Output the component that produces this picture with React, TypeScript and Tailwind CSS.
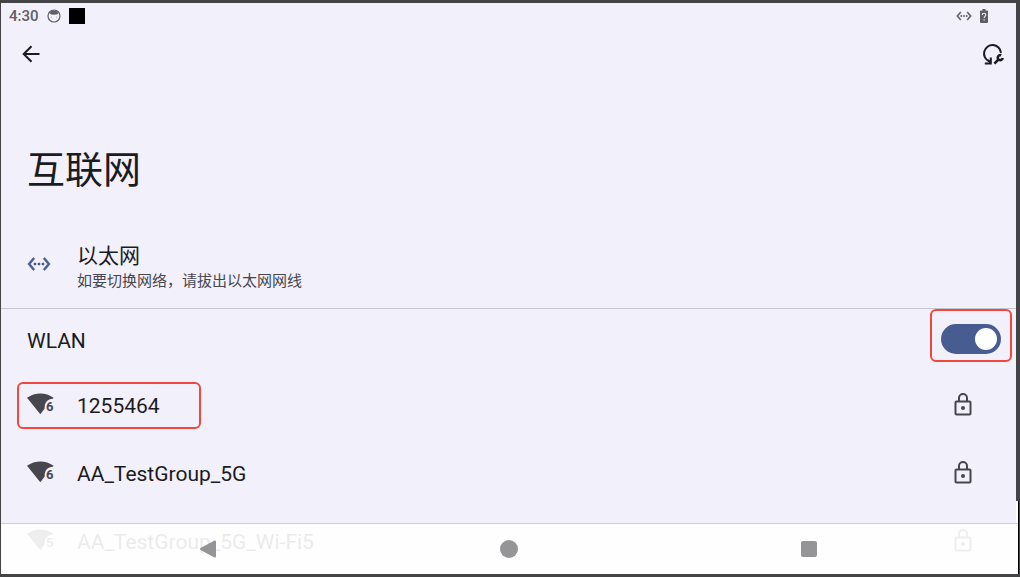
import { useState } from 'react';

type IconProps = { className?: string };

type Network = {
  ssid: string;
  generation: string;
  highlighted?: boolean;
};

const NETWORKS: Network[] = [
  { ssid: '1255464', generation: '6', highlighted: true },
  { ssid: 'AA_TestGroup_5G', generation: '6' },
  { ssid: 'AA_TestGroup_5G_Wi-Fi5', generation: '5' },
];

function EthernetIcon({ className }: IconProps) {
  return (
    <svg viewBox="0 0 24 24" fill="currentColor" stroke="currentColor" strokeWidth="0.5" className={className} aria-hidden="true">
      <path d="M7.77 6.76L6.23 5.48.82 12l5.41 6.52 1.54-1.28L3.42 12l4.35-5.24zM7 13h2v-2H7v2zm10-2h-2v2h2v-2zm-6 2h2v-2h-2v2zm6.77-7.52l-1.54 1.28L20.58 12l-4.35 5.24 1.54 1.28L23.18 12l-5.41-6.52z" />
    </svg>
  );
}

function FaceIcon({ className }: IconProps) {
  return (
    <svg viewBox="0 0 14 14" className={className} aria-hidden="true">
      <circle cx="7" cy="7" r="6" fill="none" stroke="currentColor" strokeWidth="1.2" />
      <path d="M2.8 4.6C3.2 2.2 5 1.6 7 1.6s3.8.6 4.2 3C10.5 5.4 9.5 5.8 7 5.8S3.500 5.400 2.800 4.600z" fill="currentColor" />
      <circle cx="4.6" cy="8" r="0.4" fill="currentColor" />
      <circle cx="9.4" cy="8" r="0.4" fill="currentColor" />
    </svg>
  );
}

function BatteryUnknownIcon({ className }: IconProps) {
  return (
    <svg viewBox="0 0 8 14" className={className} aria-hidden="true">
      <path d="M2.5 0h3v1.4H7.2a.8.8 0 0 1 .8.8v11a.8.8 0 0 1-.8.8H.8a.8.8 0 0 1-.8-.8v-11a.8.8 0 0 1 .8-.8h1.7z" fill="currentColor" />
      <path d="M2.2 6C2.2 3.6 5.8 3.6 5.8 6c0 1.300-1.700 1.400-1.700 3M4.100 10.200v1.300" fill="none" stroke="#f2f0fa" strokeWidth="1.1" />
    </svg>
  );
}

function BackIcon({ className }: IconProps) {
  return (
    <svg viewBox="0 0 18 18" fill="none" stroke="currentColor" strokeWidth="2" className={className} aria-hidden="true">
      <path d="M17.5 9H2M9.5 1.2L1.7 9l7.8 7.8" />
    </svg>
  );
}

function ResetNetworkIcon({ className }: IconProps) {
  return (
    <svg viewBox="0 0 22 22" fill="none" stroke="currentColor" className={className} aria-hidden="true">
      <path d="M7.2 18.4A8.5 8.5 0 1 1 19 9.800" strokeWidth="2" />
      <path d="M2.8 20.400H8.800v-6" strokeWidth="2" />
      <path d="M8.600 19.800L5.800 17" strokeWidth="2" />
      <path d="M12.400 20.600l4.400-4.400" strokeWidth="2.600" />
      <path d="M19.200 12.300a2.500 2.500 0 1 0 1.500 2.800" strokeWidth="2.600" />
    </svg>
  );
}

function WifiIcon({ generation, className }: IconProps & { generation: string }) {
  return (
    <svg viewBox="0 0 28 22" fill="currentColor" className={className} aria-hidden="true">
      <path d="M0 4.8C8-.9 18.8-.9 26.6 4.8l-.8 1C20.500 6 17.400 9.500 17.700 15.600L13.300 21.200z" />
      <text x="19" y="18" fontSize="13" fontWeight="700" fontFamily="Roboto, sans-serif">{generation}</text>
    </svg>
  );
}

function LockIcon({ className }: IconProps) {
  return (
    <svg viewBox="0 0 18 23" fill="none" stroke="currentColor" strokeWidth="2" className={className} aria-hidden="true">
      <rect x="1.5" y="8.5" width="15" height="13" rx="1" />
      <path d="M5 8.5V5a4 4 0 0 1 8 0v3.5" />
      <circle cx="9" cy="15" r="2" fill="currentColor" stroke="none" />
    </svg>
  );
}

function StatusBar() {
  return (
    <div className="flex h-[26px] items-center justify-between pl-2 pr-7 text-[#5f5d66]">
      <div className="flex items-center gap-2">
        <span className="text-[15px] leading-5 font-medium">4:30</span>
        <FaceIcon className="size-3.5" />
        <span className="size-4 bg-black" />
      </div>
      <div className="flex items-center gap-2">
        <EthernetIcon className="size-4" />
        <BatteryUnknownIcon className="h-3.5 w-2" />
      </div>
    </div>
  );
}

function NetworkRow({ ssid, generation, highlighted }: Network) {
  return (
    <li className="relative">
      <button type="button" className="flex h-[68px] w-full items-center pl-[26px] pr-11 text-left">
        <WifiIcon generation={generation} className="mb-0.5 h-[22px] w-7 text-[#47464f]" />
        <span className="ml-[22px] flex-1 pt-px text-[21px] leading-7">{ssid}</span>
        <LockIcon className="mb-0.5 h-[23px] w-[18px] text-[#47464f]" />
      </button>
      {highlighted && (
        <span className="pointer-events-none absolute left-4 top-[11px] h-[47px] w-[184px] rounded-md border-2 border-[#f0483e]" />
      )}
    </li>
  );
}

function NavigationBar() {
  return (
    <nav className="absolute bottom-0 left-0 right-[2px] flex h-[51px] items-center justify-around border-t border-[#cfced6] bg-white/91 pl-14 pr-[60px] text-[#959496]">
      <button type="button" aria-label="返回">
        <svg viewBox="0 0 18 18" className="size-[18px]" fill="currentColor" stroke="currentColor" strokeWidth="2" strokeLinejoin="round">
          <path d="M16 1.5v15L2 9z" />
        </svg>
      </button>
      <button type="button" aria-label="主屏幕" className="size-[18px] rounded-full bg-current" />
      <button type="button" aria-label="概览" className="size-4 rounded-xs bg-current" />
    </nav>
  );
}

export default function App() {
  const [wlanOn, setWlanOn] = useState(true);

  return (
    <div className="relative flex h-screen overflow-hidden border-y-3 border-l border-[#444346] bg-[#f2f0fa] font-['Roboto','Noto_Sans_CJK_SC',sans-serif] text-[#1b1b23]">
      <main lang="zh-CN" className="min-w-0 flex-1">
        <StatusBar />
        <header className="flex h-[50px] items-center justify-between pl-[21px] pr-3">
          <button type="button" aria-label="返回">
            <BackIcon className="size-[18px]" />
          </button>
          <button type="button" aria-label="重置网络">
            <ResetNetworkIcon className="size-[22px]" />
          </button>
        </header>

        <h1 className="mt-[67px] pl-[26px] text-[38px] leading-12">互联网</h1>

        <section className="mt-12 flex items-center border-b border-[#c7c5d0] pb-4 pl-[26px]">
          <EthernetIcon className="mb-1.5 size-6 text-[#475d92]" />
          <div className="ml-[26px]">
            <h2 className="text-[21px] leading-7">以太网</h2>
            <p className="text-[15px] leading-[22px] text-[#47464f]">如要切换网络，请拔出以太网网线</p>
          </div>
        </section>

        <div className="relative flex h-[62px] items-center justify-between pl-[26px] pr-[15px]">
          <label htmlFor="wlan" className="pt-0.5 text-[21px] leading-7">WLAN</label>
          <input
            id="wlan"
            type="checkbox"
            role="switch"
            checked={wlanOn}
            onChange={(e) => setWlanOn(e.target.checked)}
            className="mb-0.5 flex h-[30px] w-[60px] appearance-none items-center rounded-full bg-[#c7c5d0] px-1 before:size-[22px] before:rounded-full before:bg-white checked:justify-end checked:bg-[#475d92]"
          />
          <span className="pointer-events-none absolute right-1 top-0 h-[53px] w-[82px] rounded-md border-2 border-[#f0483e]" />
        </div>

        <ul>
          {NETWORKS.map((n) => (
            <NetworkRow key={n.ssid} {...n} />
          ))}
        </ul>
      </main>

      {/* device edge */}
      <div className="flex w-1 flex-col">
        <div className="flex-1 bg-[#444346]" />
        <div className="h-[73px] border-r border-[#444346] bg-white">
          <div className="h-full border-r border-black" />
        </div>
      </div>

      <NavigationBar />
    </div>
  );
}
